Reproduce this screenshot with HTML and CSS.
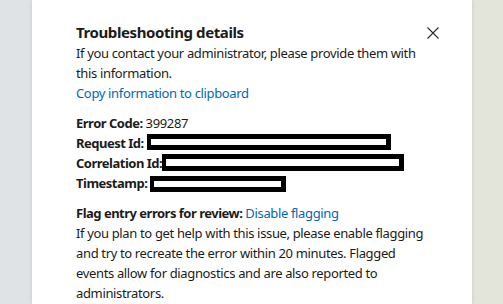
FILE: index.html
```html
<!DOCTYPE html>
<html lang="en">
<head>
    <meta charset="UTF-8">
    <meta name="viewport" content="width=device-width, initial-scale=1.0">
    <title>Troubleshooting details</title>
    <link rel="stylesheet" href="styles.css">
</head>
<body>
    <div class="page">
        <div class="side side-left"></div>

        <div class="panel">
            <div class="panel-head">
                <h2>Troubleshooting details</h2>
                <button class="close-btn" aria-label="Close">
                    <svg width="12" height="12" viewBox="0 0 12 12">
                        <path d="M0.5 0.5 L11.5 11.5 M11.5 0.5 L0.5 11.5" stroke="#2b2b2b" stroke-width="1.1" fill="none"/>
                    </svg>
                </button>
            </div>
            <p class="desc">If you contact your administrator, please provide them with this information.</p>
            <a class="link" href="#">Copy information to clipboard</a>

            <div class="details">
                <div><b>Error Code:</b> 399287</div>
                <div><b>Request Id:</b> <span class="redact redact-req"></span></div>
                <div><b>Correlation Id:</b><span class="redact redact-corr"></span></div>
                <div><b>Timestamp:</b> <span class="redact redact-time"></span></div>
            </div>

            <div class="flag">
                <b>Flag entry errors for review:</b> <a class="link" href="#">Disable flagging</a>
                <p class="desc">If you plan to get help with this issue, please enable flagging and try to recreate the error within 20 minutes. Flagged events allow for diagnostics and are also reported to administrators.</p>
            </div>
        </div>

        <div class="side side-right"></div>
    </div>
</body>
</html>
```

FILE: styles.css
```css
html, body {
    margin: 0;
    padding: 0;
    height: 304px;
    overflow: hidden;
}
body {
    font-family: "Segoe UI", "Noto Sans", sans-serif;
    font-size: 13px;
    line-height: 20px;
    letter-spacing: -0.35px;
    color: #1b1b1b;
}
.page {
    display: flex;
    height: 304px;
}
.side {
    height: 100%;
}
.side-left {
    width: 32px;
    background: #dfe3e6;
}
.side-right {
    flex: 1;
    background: #e3e4da;
}
.panel {
    width: 440px;
    background: #fff;
    box-sizing: border-box;
    padding: 22px 33px 0 44px;
    box-shadow: 0 0 4px rgba(0,0,0,0.12);
    position: relative;
}
.panel-head {
    display: flex;
    justify-content: space-between;
    align-items: flex-start;
}
h2 {
    margin: 0;
    font-size: 15px;
    line-height: 21px;
    font-weight: 700;
    letter-spacing: -0.4px;
}
.close-btn {
    border: none;
    background: none;
    padding: 0;
    margin-top: 5px;
    width: 12px;
    height: 12px;
    cursor: pointer;
}
.close-btn svg {
    display: block;
}
.desc {
    margin: 0;
}
.link {
    display: block;
    color: #0067b8;
    text-decoration: none;
}
.flag .link {
    display: inline;
}
.details {
    margin-top: 10px;
}
.details b {
    letter-spacing: -0.5px;
}
.flag {
    margin-top: 10px;
}
.flag b {
    letter-spacing: -0.5px;
}
.flag .desc {
    max-width: 349px;
}
.redact {
    display: inline-block;
    box-sizing: border-box;
    border: 5px solid #000;
    border-left-width: 4px;
    background: #fff;
    height: 16px;
    vertical-align: -2px;
}
.redact-req {
    width: 244px;
}
.redact-corr {
    width: 242px;
    height: 17px;
    vertical-align: -3px;
}
.redact-time {
    width: 136px;
    vertical-align: -4px;
}
```
